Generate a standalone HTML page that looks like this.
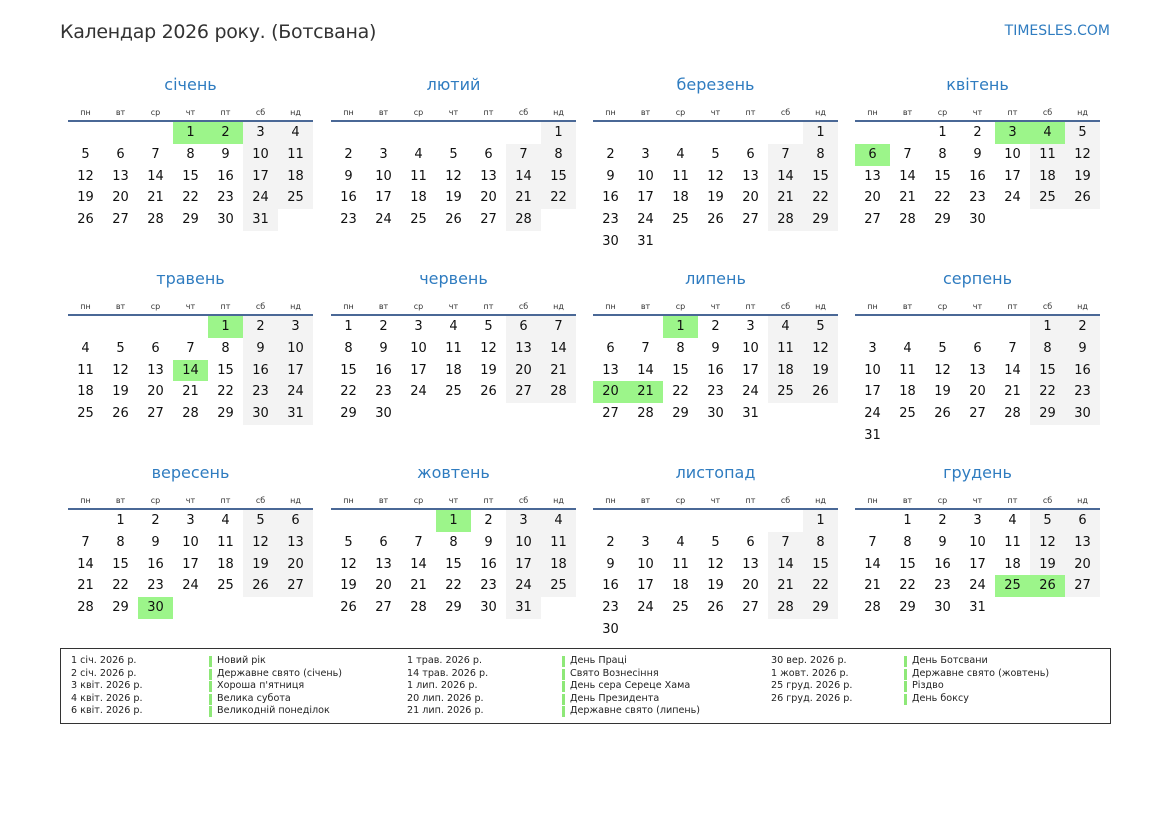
<!DOCTYPE html>
<html><head><meta charset="utf-8"><style>
*{margin:0;padding:0;box-sizing:border-box}
body{width:1169px;height:827px;background:#fff;position:relative;font-family:"DejaVu Sans","Liberation Sans",sans-serif;color:#111;overflow:hidden}
.t{position:absolute;left:60px;top:21px;font-size:19px;color:#333;letter-spacing:-0.3px}
.s{position:absolute;right:59px;top:23px;font-size:14px;color:#2f7cc0}
.m{position:absolute;width:245px}
.m h2{font-weight:normal;font-size:16px;color:#2f7cc0;text-align:center;height:26px;line-height:26px;margin-top:-13px}
.hd{display:grid;grid-template-columns:repeat(7,35px);font-size:8px;color:#333;text-align:center;margin-top:9px;height:12px;line-height:12px}
.ln{height:2px;background:#4a6896;margin-top:1px}
.g{display:grid;grid-template-columns:repeat(7,35px);grid-auto-rows:21.8px;line-height:21.8px;text-align:center;font-size:13px}
.g b{font-weight:normal}
.g .w{background:#f3f3f3}
.g .h{background:#9cf58a}
.lg{position:absolute;left:60px;top:648px;width:1051px;height:76px;border:1.5px solid #333}
.c{position:absolute;top:6px;font-size:9.6px;line-height:12.5px;color:#222;white-space:nowrap}
.c.n span{display:block;position:relative;padding-left:8px}
.c.n span:before{content:"";position:absolute;left:0;top:1px;width:3px;height:11px;background:#8ee878}
</style></head><body>
<div class="t">Календар 2026 року. (Ботсвана)</div>
<div class="s">TIMESLES.COM</div>

<div class="m" style="left:68px;top:85px"><h2>січень</h2><div class="hd"><span>пн</span><span>вт</span><span>ср</span><span>чт</span><span>пт</span><span>сб</span><span>нд</span></div><div class="ln"></div><div class="g"><b></b><b></b><b></b><b class="h">1</b><b class="h">2</b><b class="w">3</b><b class="w">4</b><b>5</b><b>6</b><b>7</b><b>8</b><b>9</b><b class="w">10</b><b class="w">11</b><b>12</b><b>13</b><b>14</b><b>15</b><b>16</b><b class="w">17</b><b class="w">18</b><b>19</b><b>20</b><b>21</b><b>22</b><b>23</b><b class="w">24</b><b class="w">25</b><b>26</b><b>27</b><b>28</b><b>29</b><b>30</b><b class="w">31</b></div></div>

<div class="m" style="left:331px;top:85px"><h2>лютий</h2><div class="hd"><span>пн</span><span>вт</span><span>ср</span><span>чт</span><span>пт</span><span>сб</span><span>нд</span></div><div class="ln"></div><div class="g"><b></b><b></b><b></b><b></b><b></b><b></b><b class="w">1</b><b>2</b><b>3</b><b>4</b><b>5</b><b>6</b><b class="w">7</b><b class="w">8</b><b>9</b><b>10</b><b>11</b><b>12</b><b>13</b><b class="w">14</b><b class="w">15</b><b>16</b><b>17</b><b>18</b><b>19</b><b>20</b><b class="w">21</b><b class="w">22</b><b>23</b><b>24</b><b>25</b><b>26</b><b>27</b><b class="w">28</b></div></div>

<div class="m" style="left:593px;top:85px"><h2>березень</h2><div class="hd"><span>пн</span><span>вт</span><span>ср</span><span>чт</span><span>пт</span><span>сб</span><span>нд</span></div><div class="ln"></div><div class="g"><b></b><b></b><b></b><b></b><b></b><b></b><b class="w">1</b><b>2</b><b>3</b><b>4</b><b>5</b><b>6</b><b class="w">7</b><b class="w">8</b><b>9</b><b>10</b><b>11</b><b>12</b><b>13</b><b class="w">14</b><b class="w">15</b><b>16</b><b>17</b><b>18</b><b>19</b><b>20</b><b class="w">21</b><b class="w">22</b><b>23</b><b>24</b><b>25</b><b>26</b><b>27</b><b class="w">28</b><b class="w">29</b><b>30</b><b>31</b></div></div>

<div class="m" style="left:855px;top:85px"><h2>квітень</h2><div class="hd"><span>пн</span><span>вт</span><span>ср</span><span>чт</span><span>пт</span><span>сб</span><span>нд</span></div><div class="ln"></div><div class="g"><b></b><b></b><b>1</b><b>2</b><b class="h">3</b><b class="h">4</b><b class="w">5</b><b class="h">6</b><b>7</b><b>8</b><b>9</b><b>10</b><b class="w">11</b><b class="w">12</b><b>13</b><b>14</b><b>15</b><b>16</b><b>17</b><b class="w">18</b><b class="w">19</b><b>20</b><b>21</b><b>22</b><b>23</b><b>24</b><b class="w">25</b><b class="w">26</b><b>27</b><b>28</b><b>29</b><b>30</b></div></div>

<div class="m" style="left:68px;top:279px"><h2>травень</h2><div class="hd"><span>пн</span><span>вт</span><span>ср</span><span>чт</span><span>пт</span><span>сб</span><span>нд</span></div><div class="ln"></div><div class="g"><b></b><b></b><b></b><b></b><b class="h">1</b><b class="w">2</b><b class="w">3</b><b>4</b><b>5</b><b>6</b><b>7</b><b>8</b><b class="w">9</b><b class="w">10</b><b>11</b><b>12</b><b>13</b><b class="h">14</b><b>15</b><b class="w">16</b><b class="w">17</b><b>18</b><b>19</b><b>20</b><b>21</b><b>22</b><b class="w">23</b><b class="w">24</b><b>25</b><b>26</b><b>27</b><b>28</b><b>29</b><b class="w">30</b><b class="w">31</b></div></div>

<div class="m" style="left:331px;top:279px"><h2>червень</h2><div class="hd"><span>пн</span><span>вт</span><span>ср</span><span>чт</span><span>пт</span><span>сб</span><span>нд</span></div><div class="ln"></div><div class="g"><b>1</b><b>2</b><b>3</b><b>4</b><b>5</b><b class="w">6</b><b class="w">7</b><b>8</b><b>9</b><b>10</b><b>11</b><b>12</b><b class="w">13</b><b class="w">14</b><b>15</b><b>16</b><b>17</b><b>18</b><b>19</b><b class="w">20</b><b class="w">21</b><b>22</b><b>23</b><b>24</b><b>25</b><b>26</b><b class="w">27</b><b class="w">28</b><b>29</b><b>30</b></div></div>

<div class="m" style="left:593px;top:279px"><h2>липень</h2><div class="hd"><span>пн</span><span>вт</span><span>ср</span><span>чт</span><span>пт</span><span>сб</span><span>нд</span></div><div class="ln"></div><div class="g"><b></b><b></b><b class="h">1</b><b>2</b><b>3</b><b class="w">4</b><b class="w">5</b><b>6</b><b>7</b><b>8</b><b>9</b><b>10</b><b class="w">11</b><b class="w">12</b><b>13</b><b>14</b><b>15</b><b>16</b><b>17</b><b class="w">18</b><b class="w">19</b><b class="h">20</b><b class="h">21</b><b>22</b><b>23</b><b>24</b><b class="w">25</b><b class="w">26</b><b>27</b><b>28</b><b>29</b><b>30</b><b>31</b></div></div>

<div class="m" style="left:855px;top:279px"><h2>серпень</h2><div class="hd"><span>пн</span><span>вт</span><span>ср</span><span>чт</span><span>пт</span><span>сб</span><span>нд</span></div><div class="ln"></div><div class="g"><b></b><b></b><b></b><b></b><b></b><b class="w">1</b><b class="w">2</b><b>3</b><b>4</b><b>5</b><b>6</b><b>7</b><b class="w">8</b><b class="w">9</b><b>10</b><b>11</b><b>12</b><b>13</b><b>14</b><b class="w">15</b><b class="w">16</b><b>17</b><b>18</b><b>19</b><b>20</b><b>21</b><b class="w">22</b><b class="w">23</b><b>24</b><b>25</b><b>26</b><b>27</b><b>28</b><b class="w">29</b><b class="w">30</b><b>31</b></div></div>

<div class="m" style="left:68px;top:473px"><h2>вересень</h2><div class="hd"><span>пн</span><span>вт</span><span>ср</span><span>чт</span><span>пт</span><span>сб</span><span>нд</span></div><div class="ln"></div><div class="g"><b></b><b>1</b><b>2</b><b>3</b><b>4</b><b class="w">5</b><b class="w">6</b><b>7</b><b>8</b><b>9</b><b>10</b><b>11</b><b class="w">12</b><b class="w">13</b><b>14</b><b>15</b><b>16</b><b>17</b><b>18</b><b class="w">19</b><b class="w">20</b><b>21</b><b>22</b><b>23</b><b>24</b><b>25</b><b class="w">26</b><b class="w">27</b><b>28</b><b>29</b><b class="h">30</b></div></div>

<div class="m" style="left:331px;top:473px"><h2>жовтень</h2><div class="hd"><span>пн</span><span>вт</span><span>ср</span><span>чт</span><span>пт</span><span>сб</span><span>нд</span></div><div class="ln"></div><div class="g"><b></b><b></b><b></b><b class="h">1</b><b>2</b><b class="w">3</b><b class="w">4</b><b>5</b><b>6</b><b>7</b><b>8</b><b>9</b><b class="w">10</b><b class="w">11</b><b>12</b><b>13</b><b>14</b><b>15</b><b>16</b><b class="w">17</b><b class="w">18</b><b>19</b><b>20</b><b>21</b><b>22</b><b>23</b><b class="w">24</b><b class="w">25</b><b>26</b><b>27</b><b>28</b><b>29</b><b>30</b><b class="w">31</b></div></div>

<div class="m" style="left:593px;top:473px"><h2>листопад</h2><div class="hd"><span>пн</span><span>вт</span><span>ср</span><span>чт</span><span>пт</span><span>сб</span><span>нд</span></div><div class="ln"></div><div class="g"><b></b><b></b><b></b><b></b><b></b><b></b><b class="w">1</b><b>2</b><b>3</b><b>4</b><b>5</b><b>6</b><b class="w">7</b><b class="w">8</b><b>9</b><b>10</b><b>11</b><b>12</b><b>13</b><b class="w">14</b><b class="w">15</b><b>16</b><b>17</b><b>18</b><b>19</b><b>20</b><b class="w">21</b><b class="w">22</b><b>23</b><b>24</b><b>25</b><b>26</b><b>27</b><b class="w">28</b><b class="w">29</b><b>30</b></div></div>

<div class="m" style="left:855px;top:473px"><h2>грудень</h2><div class="hd"><span>пн</span><span>вт</span><span>ср</span><span>чт</span><span>пт</span><span>сб</span><span>нд</span></div><div class="ln"></div><div class="g"><b></b><b>1</b><b>2</b><b>3</b><b>4</b><b class="w">5</b><b class="w">6</b><b>7</b><b>8</b><b>9</b><b>10</b><b>11</b><b class="w">12</b><b class="w">13</b><b>14</b><b>15</b><b>16</b><b>17</b><b>18</b><b class="w">19</b><b class="w">20</b><b>21</b><b>22</b><b>23</b><b>24</b><b class="h">25</b><b class="h">26</b><b class="w">27</b><b>28</b><b>29</b><b>30</b><b>31</b></div></div>

<div class="lg">
<div class="c" style="left:10px">1 січ. 2026 р.<br>2 січ. 2026 р.<br>3 квіт. 2026 р.<br>4 квіт. 2026 р.<br>6 квіт. 2026 р.</div>
<div class="c n" style="left:148px"><span>Новий рік</span><span>Державне свято (січень)</span><span>Хороша п'ятниця</span><span>Велика субота</span><span>Великодній понеділок</span></div>
<div class="c" style="left:346px">1 трав. 2026 р.<br>14 трав. 2026 р.<br>1 лип. 2026 р.<br>20 лип. 2026 р.<br>21 лип. 2026 р.</div>
<div class="c n" style="left:501px"><span>День Праці</span><span>Свято Вознесіння</span><span>День сера Сереце Хама</span><span>День Президента</span><span>Державне свято (липень)</span></div>
<div class="c" style="left:710px">30 вер. 2026 р.<br>1 жовт. 2026 р.<br>25 груд. 2026 р.<br>26 груд. 2026 р.</div>
<div class="c n" style="left:843px"><span>День Ботсвани</span><span>Державне свято (жовтень)</span><span>Різдво</span><span>День боксу</span></div>
</div>
</body></html>
